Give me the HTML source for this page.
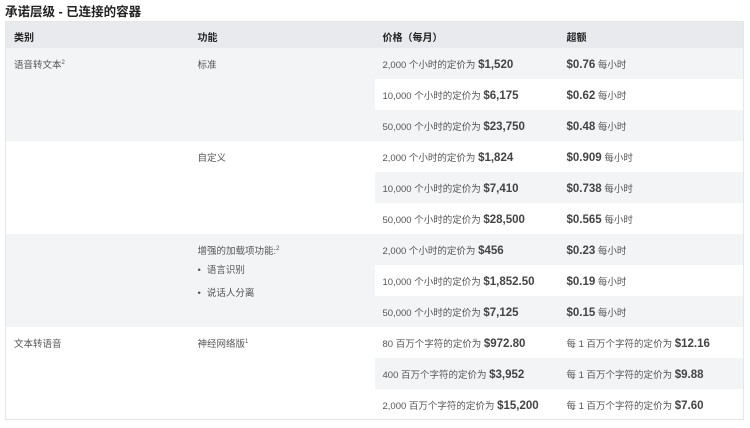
<!DOCTYPE html>
<html><head><meta charset="utf-8"><style>
*{margin:0;padding:0;box-sizing:border-box}
body{width:750px;height:428px;background:#fff;font-family:"Liberation Sans","Noto Sans CJK SC",sans-serif;color:#555;overflow:hidden;position:relative}
h1{position:absolute;left:5px;top:1px;font-size:12.5px;font-weight:bold;color:#222;letter-spacing:0}
table{position:absolute;left:5px;top:21px;width:739px;border-collapse:collapse;border:1px solid #e6e6e6}
td,th{height:31px;text-align:left;vertical-align:top;padding:9px 8px 0 8px;font-size:9.5px;white-space:nowrap}
th{height:26px;background:#e9eaed;color:#222;font-weight:bold;padding-top:7px;font-size:10px}
.g{background:#f3f4f6}
.w{background:#fff}
b{font-size:11.5px;color:#444;font-weight:bold}
ul{list-style:none;margin-top:5px}
li{margin-bottom:9px}
li:before{content:"•";margin-right:6px}
sup{font-size:6px}
</style></head><body>
<h1>承诺层级 - 已连接的容器</h1>
<table>
<colgroup><col style="width:184px"><col style="width:185px"><col style="width:184px"><col></colgroup>
<tr><th>类别</th><th>功能</th><th>价格（每月）</th><th>超额</th></tr>
<tr class="g"><td rowspan="3">语音转文本<sup>2</sup></td><td rowspan="3">标准</td><td>2,000 个小时的定价为 <b>$1,520</b></td><td><b>$0.76</b> 每小时</td></tr>
<tr class="w"><td>10,000 个小时的定价为 <b>$6,175</b></td><td><b>$0.62</b> 每小时</td></tr>
<tr class="g"><td>50,000 个小时的定价为 <b>$23,750</b></td><td><b>$0.48</b> 每小时</td></tr>
<tr class="w"><td rowspan="3"></td><td rowspan="3">自定义</td><td>2,000 个小时的定价为 <b>$1,824</b></td><td><b>$0.909</b> 每小时</td></tr>
<tr class="g"><td>10,000 个小时的定价为 <b>$7,410</b></td><td><b>$0.738</b> 每小时</td></tr>
<tr class="w"><td>50,000 个小时的定价为 <b>$28,500</b></td><td><b>$0.565</b> 每小时</td></tr>
<tr class="g"><td rowspan="3"></td><td rowspan="3">增强的加载项功能:<sup>2</sup><ul><li>语言识别</li><li>说话人分离</li></ul></td><td>2,000 个小时的定价为 <b>$456</b></td><td><b>$0.23</b> 每小时</td></tr>
<tr class="w"><td>10,000 个小时的定价为 <b>$1,852.50</b></td><td><b>$0.19</b> 每小时</td></tr>
<tr class="g"><td>50,000 个小时的定价为 <b>$7,125</b></td><td><b>$0.15</b> 每小时</td></tr>
<tr class="w"><td rowspan="3">文本转语音</td><td rowspan="3">神经网络版<sup>1</sup></td><td>80 百万个字符的定价为 <b>$972.80</b></td><td>每 1 百万个字符的定价为 <b>$12.16</b></td></tr>
<tr class="g"><td>400 百万个字符的定价为 <b>$3,952</b></td><td>每 1 百万个字符的定价为 <b>$9.88</b></td></tr>
<tr class="w"><td>2,000 百万个字符的定价为 <b>$15,200</b></td><td>每 1 百万个字符的定价为 <b>$7.60</b></td></tr>
</table>
</body></html>
